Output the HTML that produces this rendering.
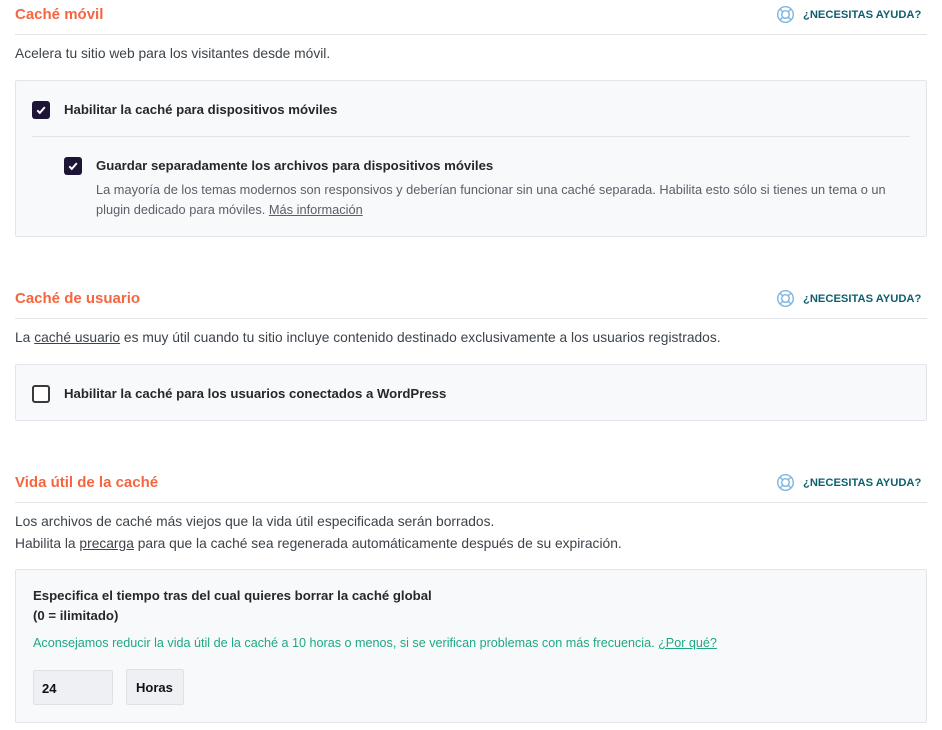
<!DOCTYPE html>
<html><head><meta charset="utf-8"><style>
*{margin:0;padding:0;box-sizing:border-box}
body{width:942px;height:730px;background:#fff;font-family:"Liberation Sans",sans-serif;color:#32373c;position:relative;overflow:hidden}
.a{position:absolute;white-space:nowrap}
.h{font-size:15px;font-weight:bold;color:#f56640;left:15px}
.help{left:776px;font-size:11.2px;font-weight:bold;color:#0e5f6e;display:flex;align-items:center;gap:8px}
.line{position:absolute;left:15px;width:912px;height:1px;background:#e2e4ea}
.t{font-size:13.8px;color:#3c434a;left:15px}
.box{position:absolute;left:15px;width:912px;background:#f8f9fb;border:1px solid #e3e5ea;border-radius:2px}
.cb{position:absolute;width:18px;height:18px;border-radius:3px;background:#1c1536;display:flex;align-items:center;justify-content:center}
.cb.u{background:#fff;border:2px solid #3a3a3a}
.lb{font-size:13.2px;font-weight:bold;color:#23282d}
.d{font-size:12.8px;color:#5a6068}
u{text-decoration:underline}
</style></head><body>
<svg width="0" height="0" style="position:absolute"><defs><symbol id="lb" viewBox="0 0 20 20"><g fill="none" stroke="#7fb6e0" stroke-width="1.5"><circle cx="10" cy="10" r="8.2"/><circle cx="10" cy="10" r="4"/><path d="M4.2 4.2l3 3M15.8 4.2l-3 3M4.2 15.8l3-3M15.8 15.8l-3-3"/></g></symbol><symbol id="ck" viewBox="0 0 12 12"><path d="M2.3 6.3l2.5 2.6 5-5.8" fill="none" stroke="#fff" stroke-width="2"/></symbol></defs></svg>

<div class="a h" style="top:6px">Caché móvil</div>
<div class="a help" style="top:5px"><svg width="19" height="19"><use href="#lb"/></svg>¿NECESITAS AYUDA?</div>
<div class="line" style="top:34px"></div>
<div class="a t" style="top:46px">Acelera tu sitio web para los visitantes desde móvil.</div>
<div class="box" style="top:80px;height:157px"></div>
<div class="cb" style="left:32px;top:101px"><svg width="12" height="12"><use href="#ck"/></svg></div>
<div class="a lb" style="left:64px;top:102px">Habilitar la caché para dispositivos móviles</div>
<div class="a" style="left:32px;top:136px;width:878px;height:1px;background:#e2e4ea"></div>
<div class="cb" style="left:64px;top:157px"><svg width="12" height="12"><use href="#ck"/></svg></div>
<div class="a lb" style="left:96px;top:158px">Guardar separadamente los archivos para dispositivos móviles</div>
<div class="a d" style="left:96px;top:182px">La mayoría de los temas modernos son responsivos y deberían funcionar sin una caché separada. Habilita esto sólo si tienes un tema o un</div>
<div class="a d" style="left:96px;top:202px">plugin dedicado para móviles. <u>Más información</u></div>

<div class="a h" style="top:290px">Caché de usuario</div>
<div class="a help" style="top:289px"><svg width="19" height="19"><use href="#lb"/></svg>¿NECESITAS AYUDA?</div>
<div class="line" style="top:318px"></div>
<div class="a t" style="top:330px">La <u>caché usuario</u> es muy útil cuando tu sitio incluye contenido destinado exclusivamente a los usuarios registrados.</div>
<div class="box" style="top:364px;height:57px"></div>
<div class="cb u" style="left:32px;top:385px"></div>
<div class="a lb" style="left:64px;top:386px">Habilitar la caché para los usuarios conectados a WordPress</div>

<div class="a h" style="top:474px">Vida útil de la caché</div>
<div class="a help" style="top:473px"><svg width="19" height="19"><use href="#lb"/></svg>¿NECESITAS AYUDA?</div>
<div class="line" style="top:502px"></div>
<div class="a t" style="top:514px">Los archivos de caché más viejos que la vida útil especificada serán borrados.</div>
<div class="a t" style="top:536px">Habilita la <u>precarga</u> para que la caché sea regenerada automáticamente después de su expiración.</div>
<div class="box" style="top:569px;height:154px"></div>
<div class="a lb" style="left:33px;top:588px">Especifica el tiempo tras del cual quieres borrar la caché global</div>
<div class="a lb" style="left:33px;top:608px">(0 = ilimitado)</div>
<div class="a d" style="left:33px;top:636px;color:#1fa883;font-size:12.6px">Aconsejamos reducir la vida útil de la caché a 10 horas o menos, si se verifican problemas con más frecuencia. <u>¿Por qué?</u></div>
<div class="a" style="left:33px;top:670px;width:80px;height:35px;background:#eef0f3;border:1px solid #dfe1e6;border-radius:2px;font-size:13px;font-weight:bold;color:#111;padding:10px 0 0 8px">24</div>
<div class="a" style="left:126px;top:669px;width:58px;height:36px;background:#eef0f3;border:1px solid #dfe1e6;border-radius:2px;font-size:13px;font-weight:bold;color:#111;padding:10px 0 0 9px">Horas</div>
</body></html>
